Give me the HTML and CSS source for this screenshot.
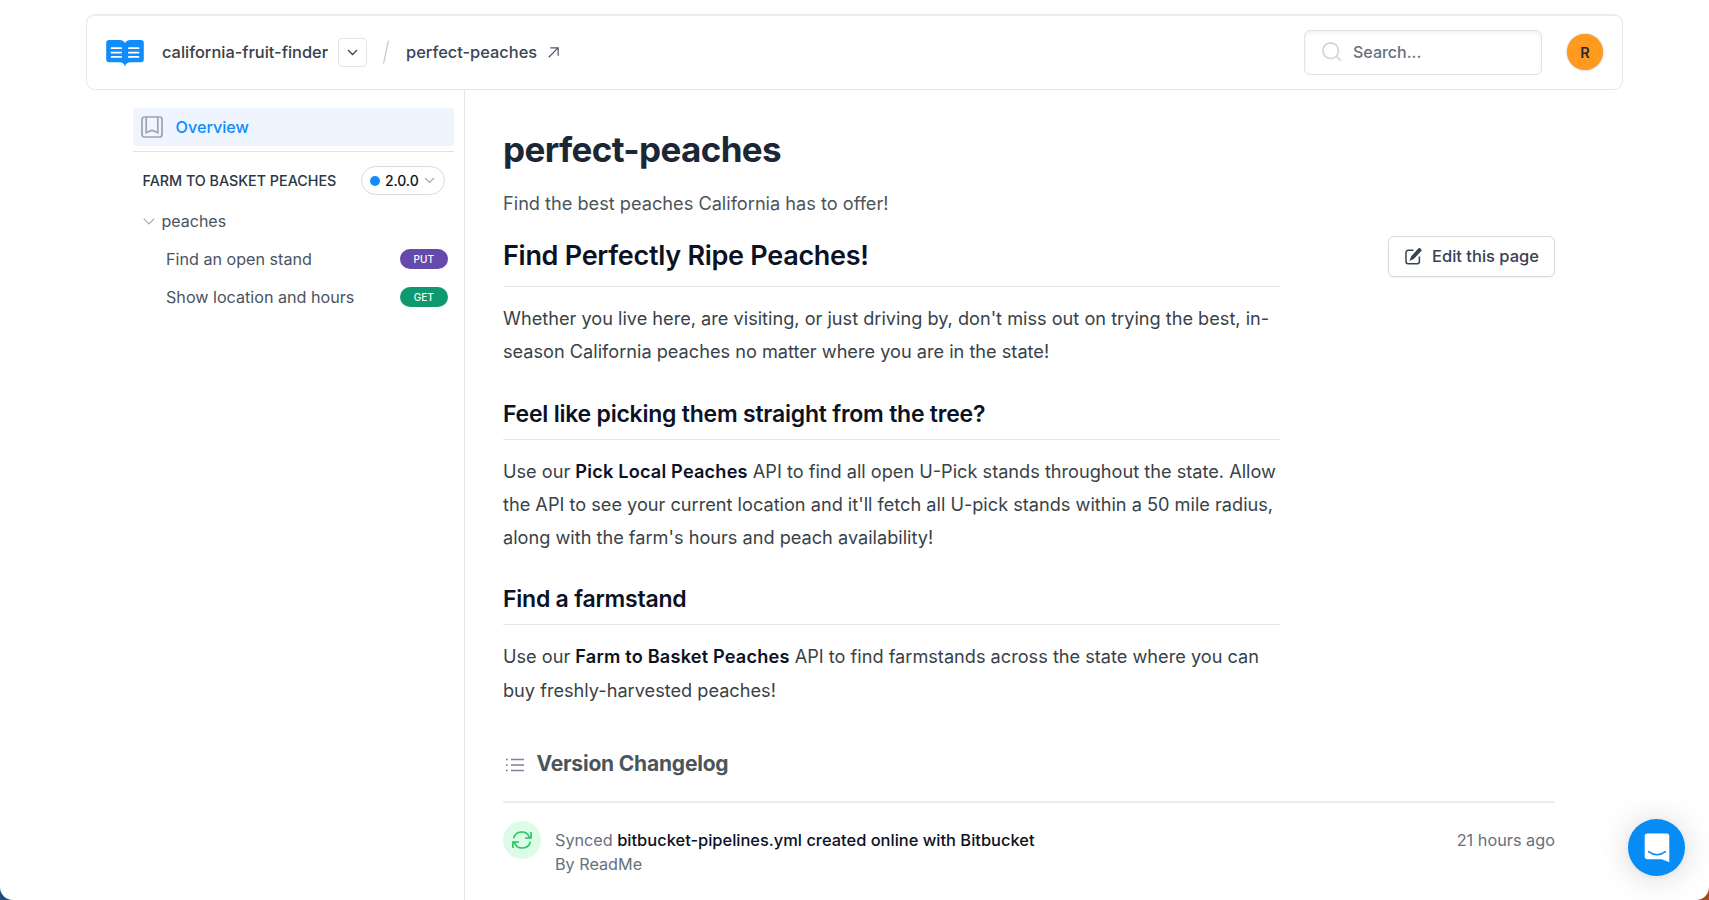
FILE: index.html
```html
<!DOCTYPE html>
<html lang="en">
<head>
<meta charset="UTF-8" />
<meta name="viewport" content="width=device-width, initial-scale=1" />
<title>perfect-peaches</title>
<link rel="stylesheet" href="styles.css">
</head>
<body>

<div class="page">
  <header class="header">
    <svg class="logo" width="38" height="27" viewBox="0 0 39 28">
      <path fill="#118cfd" d="M3 0h11c2.500 0 4.400 1.200 5.500 3.200C20.600 1.200 22.500 0 25 0h11a3 3 0 0 1 3 3v17a3 3 0 0 1-3 3h-10.500c-3.400 0-5 1.300-6 4.500-1-3.200-2.600-4.500-6-4.500H3a3 3 0 0 1-3-3V3a3 3 0 0 1 3-3z"/>
      <path stroke="#fff" stroke-width="1.800" stroke-linecap="round" d="M5.500 8.500h10M5.500 13h10M5.500 17.500h10M23.500 8.500h10M23.500 13h10M23.500 17.500h10"/>
    </svg>
    <span class="group-name">california-fruit-finder</span>
    <button class="switcher" type="button">
      <svg width="11" height="7" viewBox="0 0 11 7"><path d="M1 1l4.500 4.500L10 1"/></svg>
    </button>
    <svg class="slash" width="8" height="24" viewBox="0 0 8 24"><path d="M6.500 .5l-5 23"/></svg>
    <a class="project-name" href="#">perfect-peaches</a>
    <svg class="external" width="11" height="11" viewBox="0 0 12 12"><path d="M.8 11.200L11 1M2.500 .9h8.600v8.600"/></svg>

    <div class="search">
      <svg width="20" height="20" viewBox="0 0 20 20"><circle cx="8.700" cy="8.700" r="7.800"/><path d="M14.300 14.300l4.700 4.700"/></svg>
      <span>Search...</span>
    </div>
    <span class="avatar">R</span>
  </header>

  <div class="columns">
    <nav class="sidebar">
      <a class="overview" href="#">
        <svg width="22" height="22" viewBox="0 0 22 22"><rect x="1" y="1" width="20" height="20" rx="2.500"/><path d="M5.200 1v15.800l5.800-2.600 5.800 2.600V1"/></svg>
        <span>Overview</span>
      </a>
      <div class="category">
        <span class="category-title">FARM TO BASKET PEACHES</span>
        <span class="version">
          <i class="dot"></i><span>2.0.0</span>
          <svg width="11" height="7" viewBox="0 0 11 7"><path d="M1 1l4.500 4.500L10 1"/></svg>
        </span>
      </div>
      <a class="folder" href="#">
        <svg width="12" height="7" viewBox="0 0 12 7"><path d="M.7 .7L6 6l5.300-5.300"/></svg>
        <span>peaches</span>
      </a>
      <a class="endpoint" href="#"><span>Find an open stand</span><b class="method put">PUT</b></a>
      <a class="endpoint" href="#"><span>Show location and hours</span><b class="method get">GET</b></a>
    </nav>

    <main class="main">
      <h1>perfect-peaches</h1>
      <p class="tagline">Find the best peaches California has to offer!</p>

      <div class="content">
        <article class="article">
          <h2>Find Perfectly Ripe Peaches!</h2>
          <p>Whether you live here, are visiting, or just driving by, don't miss out on trying the best, in-<br>season California peaches no matter where you are in the state!</p>
          <h3>Feel like picking them straight from the tree?</h3>
          <p>Use our <strong>Pick Local Peaches</strong> API to find all open U-Pick stands throughout the state. Allow<br>the API to see your current location and it'll fetch all U-pick stands within a 50 mile radius,<br>along with the farm's hours and peach availability!</p>
          <h3>Find a farmstand</h3>
          <p>Use our <strong>Farm to Basket Peaches</strong> API to find farmstands across the state where you can<br>buy freshly-harvested peaches!</p>
        </article>
        <a class="edit" href="#">
          <svg width="17" height="17" viewBox="0 0 17 17"><path class="box" d="M8.500 2.300H3.200A2.200 2.200 0 0 0 1 4.500v9A2.200 2.200 0 0 0 3.200 15.700h9a2.200 2.200 0 0 0 2.200-2.200V8.500"/><path class="pen" d="M13 .8a1.900 1.900 0 0 1 2.900 2.700l-7.200 7.500-4.300 1.900 1.700-4.400z"/></svg>
          <span>Edit this page</span>
        </a>
      </div>

      <section class="changelog">
        <h4>
          <svg width="18" height="14" viewBox="0 0 18 14"><path d="M5 1.500h13M5 7h13M5 12.500h13M0 1.500h1.800M0 7h1.800M0 12.500h1.800"/></svg>
          <span>Version Changelog</span>
        </h4>
        <div class="entry">
          <span class="sync">
            <svg width="20" height="20" viewBox="0 0 20 20"><path d="M1.600 8.200A8.300 8.300 0 0 1 17.400 7.300M19.100 2v6h-6M18.400 11.800A8.300 8.300 0 0 1 2.600 12.700M.9 18v-6h6"/></svg>
          </span>
          <div class="entry-text">
            <div>Synced <b>bitbucket-pipelines.yml created online with Bitbucket</b></div>
            <div>By ReadMe</div>
          </div>
          <time>21 hours ago</time>
        </div>
      </section>
    </main>
  </div>

  <button class="chat" type="button">
    <svg width="26" height="30" viewBox="0 0 26 30"><path class="bubble" d="M3.500 .5h19A2.800 2.800 0 0 1 25.300 3.300V29.300l-7.500-3H3.500A2.800 2.800 0 0 1 .7 23.500V3.300A2.800 2.800 0 0 1 3.500 .5z"/><path class="smile" d="M4.600 18.700c5 4 11.800 4 16.800 0"/></svg>
  </button>
</div>

</body>
</html>
```
FILE: styles.css
```css
* {
  box-sizing: border-box;
}
body {
  margin: 0;
  font-family: Inter, "Liberation Sans", sans-serif;
  font-size: 16px;
  color: #384248;
  background: linear-gradient(90deg, #1f4a80 50%, #b0431c 50%);
}
a {
  color: inherit;
  text-decoration: none;
}
button {
  font: inherit;
  padding: 0;
}
svg {
  fill: none;
  flex: none;
}
h1, h2, h3, h4, p {
  margin: 0;
}
.page {
  height: 900px;
  overflow: hidden;
  background: #fff;
  border-radius: 0 0 13px 13px;
  padding: 14px 86px 0 86px;
  display: flex;
  flex-direction: column;
}

/* header */
.header {
  height: 76px;
  flex: none;
  border: 1px solid #e6e7ec;
  border-top: 2px solid #ecedf1;
  border-radius: 9px;
  display: flex;
  align-items: center;
  padding: 0 19px 1px;
  font-weight: 500;
}
.logo {
  margin: 3px 18px 0 0;
}
.group-name {
  width: 176px;
  font-size: 16.400px;
}
.switcher {
  width: 29px;
  height: 29px;
  border: 1px solid #e2e4ea;
  border-radius: 4px;
  background: #fff;
  display: flex;
  align-items: center;
  justify-content: center;
}
.switcher svg {
  stroke: #384248;
  stroke-width: 1.300;
}
.slash {
  margin: 0 16px 0 15px;
  stroke: #c8ccd4;
  stroke-width: 1.300;
}
.project-name {
  width: 142px;
  font-size: 16.400px;
  color: #3b4453;
}
.external {
  stroke: #4b5563;
  stroke-width: 1.300;
}
.search {
  margin-left: auto;
  width: 238px;
  height: 45px;
  border: 1px solid #e1e3e8;
  border-radius: 6px;
  box-shadow: inset 0 2px 4px rgba(0,0,0,0.06);
  display: flex;
  align-items: center;
  gap: 11px;
  padding-left: 17px;
  color: #667080;
}
.search svg {
  stroke: #ced2d9;
  stroke-width: 1.600;
}
.avatar {
  width: 36px;
  height: 36px;
  margin-left: 25px;
  border-radius: 50%;
  background: #ff9a1f;
  box-shadow: 0 0 2px rgba(0,0,0,0.35);
  color: #252a38;
  font-size: 14.500px;
  font-weight: 600;
  display: flex;
  align-items: center;
  justify-content: center;
}

.columns {
  flex: 1;
  display: flex;
}

/* sidebar */
.sidebar {
  width: 379px;
  padding: 18px 10px 0 47px;
  border-right: 1px solid #e2e4ea;
  color: #4a5462;
}
.overview {
  height: 38px;
  background: #eef5ff;
  border-radius: 4px;
  display: flex;
  align-items: center;
  gap: 12.500px;
  padding-left: 8px;
  color: #118cfd;
  font-size: 16.200px;
  font-weight: 500;
}
.overview svg {
  stroke: #9ba3b1;
  stroke-width: 1.700;
}
.category {
  margin-top: 5px;
  border-top: 1px solid #dfe1e6;
  height: 51px;
  padding: 14px 9px 0 9.500px;
  display: flex;
  justify-content: space-between;
}
.category-title {
  line-height: 30px;
  font-size: 14.300px;
  font-weight: 500;
  color: #2c3645;
}
.version {
  width: 84px;
  height: 29px;
  border: 1px solid #d8dae2;
  border-radius: 15px;
  display: flex;
  align-items: center;
  gap: 5px;
  padding-left: 8px;
  font-size: 14px;
  font-weight: 500;
  letter-spacing: -0.1px;
  color: #0d1424;
}
.version svg,
.folder svg {
  stroke: #a2a9b5;
  stroke-width: 1.200;
}
.dot {
  width: 10px;
  height: 10px;
  border-radius: 50%;
  background: #118cfd;
}
.folder,
.endpoint {
  height: 38px;
  display: flex;
  align-items: center;
}
.folder {
  gap: 7px;
  padding-left: 9.500px;
}
.endpoint {
  justify-content: space-between;
  padding: 0 6.500px 0 33px;
  font-size: 16.150px;
}
.method {
  width: 47.500px;
  height: 20px;
  border-radius: 10px;
  color: #fff;
  font-size: 10px;
  font-weight: 500;
  line-height: 20px;
  text-align: center;
}
.put {
  background: #6549ab;
}
.get {
  background: #0f996e;
}

/* main */
.main {
  flex: 1;
  padding: 35px 68px 0 38px;
}
h1 {
  font-size: 35px;
  line-height: 48px;
  font-weight: 700;
  letter-spacing: -0.63px;
  color: #1c2736;
}
.tagline {
  margin-top: 14px;
  font-size: 18.180px;
  line-height: 32px;
  color: #4c555a;
}
.content {
  margin-top: 17px;
  display: flex;
  justify-content: space-between;
  align-items: flex-start;
}
.article {
  width: 777px;
  font-size: 18.170px;
  line-height: 33.250px;
  white-space: nowrap;
}
h2 {
  font-size: 27px;
  line-height: 40px;
  font-weight: 600;
  letter-spacing: -0.28px;
  color: #0b1224;
  padding-bottom: 10px;
  border-bottom: 1px solid #e6e7ea;
}
h3 {
  margin-top: 29px;
  font-size: 23px;
  line-height: 32px;
  font-weight: 600;
  letter-spacing: -0.23px;
  color: #0b1224;
  padding-bottom: 9px;
  border-bottom: 1px solid #e6e7ea;
}
.article p {
  margin-top: 15px;
}
.article strong {
  font-weight: 600;
  letter-spacing: 0.18px;
  color: #0b1224;
}
.edit {
  width: 167px;
  height: 41px;
  border: 1px solid #d6dae1;
  border-radius: 6px;
  box-shadow: 0 1px 2px rgba(0,0,0,0.06);
  display: flex;
  align-items: center;
  gap: 10px;
  padding: 0 0 1px 16px;
  font-size: 16.500px;
  font-weight: 500;
  color: #384254;
  white-space: nowrap;
}
.edit .box {
  stroke: #384254;
  stroke-width: 1.500;
}
.edit .pen {
  fill: #384254;
}

/* changelog */
.changelog {
  margin-top: 42px;
}
h4 {
  display: flex;
  align-items: center;
  gap: 12.500px;
  padding: 0 0 22px 3px;
  border-bottom: 2px solid #e9eef3;
  font-size: 21px;
  line-height: 30px;
  letter-spacing: -0.2px;
  color: #4c555a;
}
h4 svg {
  margin-top: 2px;
  stroke: #7b8494;
  stroke-width: 1.500;
}
.entry {
  display: flex;
  align-items: flex-start;
  padding-top: 18px;
  font-size: 16.200px;
  line-height: 24px;
  color: #667080;
}
.sync {
  width: 38px;
  height: 38px;
  border-radius: 50%;
  background: #dcfce7;
  display: flex;
  align-items: center;
  justify-content: center;
}
.sync svg {
  stroke: #22c55e;
  stroke-width: 1.600;
}
.entry-text {
  margin: 7px 0 0 14px;
}
.entry-text b {
  font-size: 16.450px;
  font-weight: 500;
  color: #0b1224;
}
.entry time {
  margin: 7px 0 0 auto;
  font-size: 16.300px;
}

/* chat launcher */
.chat {
  position: fixed;
  right: 24px;
  bottom: 24px;
  width: 57px;
  height: 57px;
  border: none;
  border-radius: 50%;
  background: #068cf5;
  box-shadow: 0 1px 6px rgba(0,0,0,0.06), 0 2px 32px rgba(0,0,0,0.16);
  display: flex;
  align-items: center;
  justify-content: center;
}
.chat .bubble {
  fill: #fff;
}
.chat .smile {
  stroke: #068cf5;
  stroke-width: 1.600;
  stroke-linecap: round;
}
```
